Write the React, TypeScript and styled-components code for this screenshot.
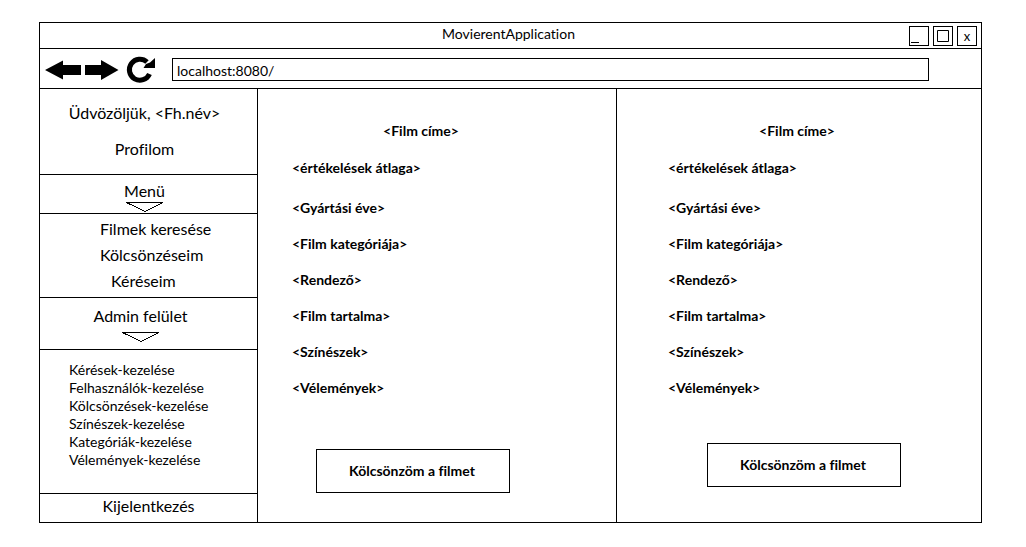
import React from 'react';
import styled, { createGlobalStyle } from 'styled-components';

const GlobalStyle = createGlobalStyle`
  * { box-sizing: border-box; }
  body {
    margin: 0;
    background: #fff;
    color: #000;
    font-family: Lato, "Open Sans", sans-serif;
    font-size: 14px;
    font-variant-ligatures: none;
  }
`;

const Page = styled.div`
  padding: 22px 44px 24px 39px;
`;

const Window = styled.div`
  border: 1px solid #000;
`;

const TitleBar = styled.header`
  display: grid;
  grid-template-columns: 1fr auto 1fr;
  align-items: center;
  height: 26px;
  padding-right: 4px;
  border-bottom: 1px solid #000;
`;

const AppTitle = styled.h1`
  grid-column: 2;
  align-self: start;
  margin: 0;
  font-size: 14px;
  line-height: 22px;
  font-weight: 400;
`;

const WindowControls = styled.div`
  display: flex;
  justify-content: flex-end;
  gap: 4px;
`;

const WindowButton = styled.button`
  display: flex;
  justify-content: center;
  width: 20px;
  height: 20px;
  padding: 0;
  border: 1px solid #000;
  background: #fff;
  color: #000;
  font: inherit;
  font-size: 13px;
  line-height: 18px;
`;

const Toolbar = styled.div`
  display: flex;
  align-items: center;
  height: 40px;
  padding: 2px 52px 0 5px;
  border-bottom: 1px solid #000;
`;

const NavButton = styled.button`
  display: flex;
  flex: none;
  margin-right: 4px;
  padding: 0;
  border: 0;
  background: none;
`;

const AddressInput = styled.input`
  flex: 1;
  min-width: 0;
  height: 23px;
  margin-left: 13px;
  padding: 1px 5px 0 4px;
  border: 1px solid #000;
  border-radius: 0;
  background: #fff;
  color: #000;
  font: inherit;
`;

const Main = styled.div`
  display: grid;
  grid-template-columns: 218px 358fr 365fr;
`;

const Sidebar = styled.aside`
  border-right: 1px solid #000;
`;

const Section = styled.section<{ $padding: string }>`
  display: flex;
  flex-direction: column;
  align-items: center;
  padding: ${(p) => p.$padding};
  font-size: 16px;
  & + & { border-top: 1px solid #000; }
`;

const SideLink = styled.a`
  color: inherit;
  line-height: 24px;
  text-decoration: none;
`;

const Greeting = styled.p`
  margin: 0 0 12px;
  line-height: 24px;
`;

const Toggle = styled.button<{ $gap?: number }>`
  display: flex;
  flex-direction: column;
  align-items: center;
  gap: ${(p) => p.$gap ?? 0}px;
  padding: 0;
  border: 0;
  background: none;
  color: inherit;
  font: inherit;
  line-height: 22px;
`;

const LinkList = styled.ul<{ $line: number; $size: number }>`
  align-self: stretch;
  margin: 0;
  padding: 0;
  list-style: none;
  font-size: ${(p) => p.$size}px;
  line-height: ${(p) => p.$line}px;
  a { line-height: inherit; }
`;

const LinkItem = styled.li<{ $nested?: boolean }>`
  padding-left: ${(p) => (p.$nested ? 11 : 0)}px;
`;

const FilmPanel = styled.article<{ $inset: number }>`
  padding: 24px 0 0 ${(p) => p.$inset}px;
  & + & { border-left: 1px solid #000; }
`;

const FilmInfo = styled.div`
  max-width: 258px;
  font-weight: 700;
  line-height: 36px;
`;

const FilmTitle = styled.h2`
  margin: 0 0 1px;
  font-size: 14px;
  text-align: center;
`;

const Rating = styled.p`
  margin: 0 0 4px;
`;

const Details = styled.ul`
  margin: 0;
  padding: 0;
  list-style: none;
`;

const RentButton = styled.button<{ $top: number; $left: number }>`
  display: block;
  width: 194px;
  height: 44px;
  margin: ${(p) => p.$top}px 0 0 ${(p) => p.$left}px;
  padding: 0 2px 2px 0;
  border: 1px solid #000;
  background: #fff;
  color: #000;
  font: inherit;
  font-weight: 700;
`;

const ArrowIcon = ({ right = false }: { right?: boolean }) => (
  <svg width="36" height="20" viewBox="0 0 36 20" aria-hidden="true">
    {right ? (
      <path d="M0 5H16V0L33.500 10L16 20V15H0z" />
    ) : (
      <path d="M36 5H18V0.500L0 10L18 19.500V15H36z" />
    )}
  </svg>
);

const ReloadIcon = () => (
  <svg width="30" height="28" viewBox="0 0 30 28" aria-hidden="true">
    <path d="M24.500 18A10.500 10.500 0 1 1 22 6" fill="none" stroke="#000" strokeWidth="5" />
    <path d="M30 2V12H18.500L21 8L25 6.500z" />
  </svg>
);

const Chevron = () => (
  <svg width="38" height="11" viewBox="0 0 38 11" aria-hidden="true">
    <path d="M0.500 0.500H37L19 9.500z" fill="none" stroke="#000" shapeRendering="crispEdges" />
  </svg>
);

const adminLinks = [
  'Kérések-kezelése',
  'Felhasználók-kezelése',
  'Kölcsönzések-kezelése',
  'Színészek-kezelése',
  'Kategóriák-kezelése',
  'Vélemények-kezelése',
];

const filmDetails = [
  '<Gyártási éve>',
  '<Film kategóriája>',
  '<Rendező>',
  '<Film tartalma>',
  '<Színészek>',
  '<Vélemények>',
];

const films = [
  { id: 1, inset: 34, buttonTop: 43, buttonLeft: 24 },
  { id: 2, inset: 51, buttonTop: 37, buttonLeft: 39 },
];

export default function App() {
  return (
    <Page>
      <GlobalStyle />
      <Window>
        <TitleBar>
          <AppTitle>MovierentApplication</AppTitle>
          <WindowControls>
            <WindowButton aria-label="Kis méret">
              <svg width="18" height="18" viewBox="0 0 18 18"><path d="M1 15.500H9" stroke="#000" /></svg>
            </WindowButton>
            <WindowButton aria-label="Teljes méret">
              <svg width="18" height="18" viewBox="0 0 18 18"><path d="M3.500 3.500H14.500V14.500H3.500z" fill="none" stroke="#000" /></svg>
            </WindowButton>
            <WindowButton aria-label="Bezárás">x</WindowButton>
          </WindowControls>
        </TitleBar>
        <Toolbar>
          <NavButton aria-label="Vissza"><ArrowIcon /></NavButton>
          <NavButton aria-label="Előre"><ArrowIcon right /></NavButton>
          <NavButton aria-label="Frissítés"><ReloadIcon /></NavButton>
          <AddressInput aria-label="Cím" defaultValue="localhost:8080/" />
        </Toolbar>
        <Main>
          <Sidebar>
            <Section $padding="12px 8px 13px 0">
              <Greeting>Üdvözöljük, &lt;Fh.név&gt;</Greeting>
              <SideLink href="#profil">Profilom</SideLink>
            </Section>
            <Section $padding="5px 8px 0 0">
              <Toggle>Menü<Chevron /></Toggle>
            </Section>
            <Section $padding="2px 0 3px 60px">
              <LinkList $size={16} $line={26}>
                <LinkItem><SideLink href="#filmek">Filmek keresése</SideLink></LinkItem>
                <LinkItem><SideLink href="#kolcsonzeseim">Kölcsönzéseim</SideLink></LinkItem>
                <LinkItem $nested><SideLink href="#kereseim">Kéréseim</SideLink></LinkItem>
              </LinkList>
            </Section>
            <Section $padding="7px 16px 6px 0">
              <Toggle $gap={5}>Admin felület<Chevron /></Toggle>
            </Section>
            <Section $padding="11px 0 24px 29px">
              <LinkList $size={14} $line={18}>
                {adminLinks.map((label) => (
                  <LinkItem key={label}><SideLink href="#admin">{label}</SideLink></LinkItem>
                ))}
              </LinkList>
            </Section>
            <Section $padding="0 0 4px">
              <SideLink href="#kijelentkezes">Kijelentkezés</SideLink>
            </Section>
          </Sidebar>
          {films.map((film) => (
            <FilmPanel key={film.id} $inset={film.inset}>
              <FilmInfo>
                <FilmTitle>&lt;Film címe&gt;</FilmTitle>
                <Rating>&lt;értékelések átlaga&gt;</Rating>
                <Details>
                  {filmDetails.map((detail) => <li key={detail}>{detail}</li>)}
                </Details>
              </FilmInfo>
              <RentButton $top={film.buttonTop} $left={film.buttonLeft}>Kölcsönzöm a filmet</RentButton>
            </FilmPanel>
          ))}
        </Main>
      </Window>
    </Page>
  );
}
